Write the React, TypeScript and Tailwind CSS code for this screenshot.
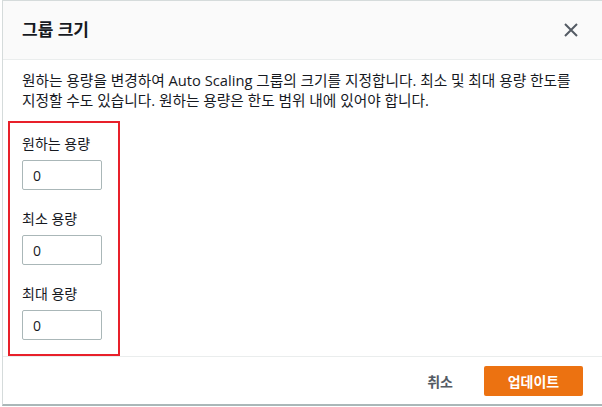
import React from 'react';

const Field: React.FC<{ label: string; value: string }> = ({ label, value }) => (
  <div className="flex flex-col">
    <label className="text-[14px] leading-[20px] text-[#16191f] mb-[6px]">{label}</label>
    <input
      defaultValue={value}
      className="w-[80px] h-[30px] border border-[#aab7b8] rounded-[2px] px-[10px] text-[14px] text-[#16191f] outline-none"
    />
  </div>
);

const App: React.FC = () => {
  return (
    <div
      className="w-[602px] h-[407px] bg-white"
      style={{ fontFamily: '"Open Sans", "Noto Sans CJK KR", sans-serif' }}
    >
      <div className="ml-[2px] w-[600px] h-[406px] flex flex-col border-l border-t border-[#d5dbdb] border-b-2 border-b-[#aab7b8]">
        <div className="h-[59px] shrink-0 flex items-center justify-between pl-[19px] pr-[24px] bg-[#fafafa] border-b border-[#eaeded]">
          <h2 className="text-[17px] font-bold text-[#16191f]">그룹 크기</h2>
          <button className="text-[#545b64]">
            <svg width="14" height="14" viewBox="0 0 14 14" fill="none" stroke="currentColor" strokeWidth="2">
              <path d="M1 1l12 12M13 1L1 13" />
            </svg>
          </button>
        </div>

        <div className="flex-1 pt-[10px] pl-[5px]">
          <p className="pl-[14px] text-[14.7px] leading-[20px] text-[#16191f]">
            원하는 용량을 변경하여 Auto Scaling 그룹의 크기를 지정합니다. 최소 및 최대 용량 한도를
            <br />
            지정할 수도 있습니다. 원하는 용량은 한도 범위 내에 있어야 합니다.
          </p>
          <div className="mt-[11px] w-[112px] border-2 border-[#e8202a] pt-[11px] pb-[14px] pl-[12px] flex flex-col gap-[19px]">
            <Field label="원하는 용량" value="0" />
            <Field label="최소 용량" value="0" />
            <Field label="최대 용량" value="0" />
          </div>
        </div>

        <div className="h-[49px] shrink-0 flex items-center justify-end gap-[11px] pr-[19px] border-t border-[#eaeded]">
          <button className="px-[20px] text-[14px] font-bold text-[#545b64]">취소</button>
          <button className="w-[99px] h-[30px] rounded-[2px] bg-[#ec7211] text-white text-[14px] font-bold">
            업데이트
          </button>
        </div>
      </div>
    </div>
  );
};

export default App;
